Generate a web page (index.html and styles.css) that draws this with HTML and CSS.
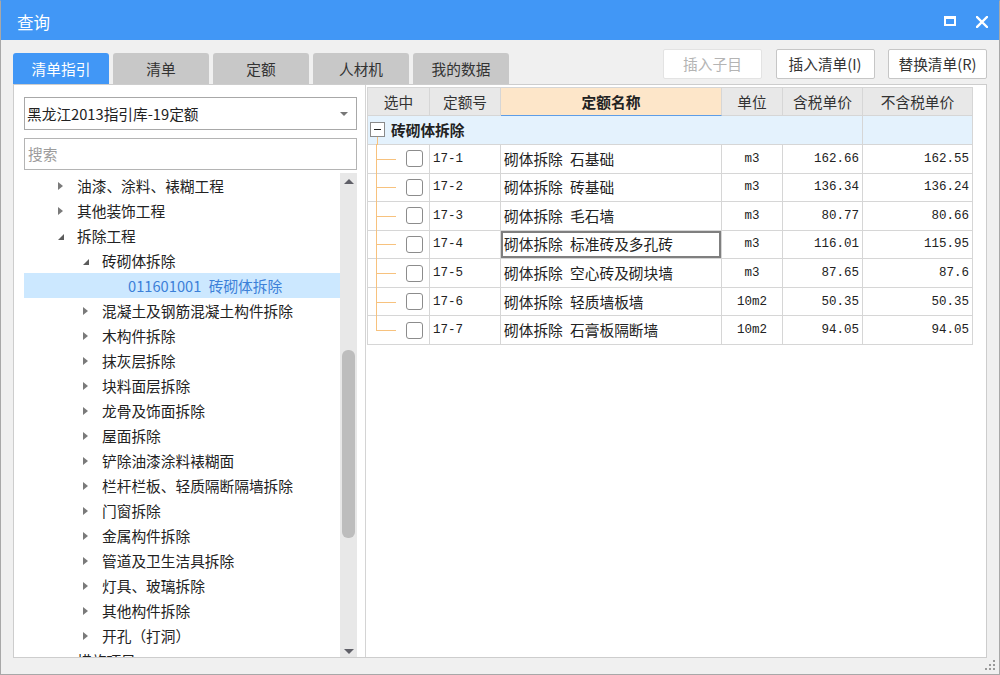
FILE: index.html
```html
<!DOCTYPE html>
<html lang="zh-CN">
<head>
<meta charset="utf-8">
<title>查询</title>
<link rel="stylesheet" href="styles.css">
</head>
<body>
<div class="window">
  <div class="titlebar">
    <span class="title">查询</span>
    <div class="win-ctrls">
      <svg class="ic-max" width="12" height="10" viewBox="0 0 12 10"><rect x="0" y="0" width="12" height="3" fill="#fff"/><rect x="1" y="1" width="10" height="8" fill="none" stroke="#fff" stroke-width="2"/></svg>
      <svg class="ic-close" width="12" height="12" viewBox="0 0 12 12"><path d="M1 1L11 11M11 1L1 11" stroke="#fff" stroke-width="2.4" stroke-linecap="square"/></svg>
    </div>
  </div>
  <div class="main">
    <div class="topbar">
      <div class="tabs">
        <div class="tab active">清单指引</div>
        <div class="tab">清单</div>
        <div class="tab">定额</div>
        <div class="tab">人材机</div>
        <div class="tab">我的数据</div>
      </div>
      <div class="actions">
        <button class="btn disabled">插入子目</button>
        <button class="btn">插入清单(I)</button>
        <button class="btn">替换清单(R)</button>
      </div>
    </div>
    <div class="content">
      <div class="left-pane">
        <div class="combo"><span class="combo-text">黑龙江2013指引库-19定额</span><span class="caret"></span></div>
        <div class="search">搜索</div>
        <div class="tree-wrap">
          <div class="tree">
            <div class="node l1"><span class="arr arr-closed"></span><span class="lbl">油漆、涂料、裱糊工程</span></div>
            <div class="node l1"><span class="arr arr-closed"></span><span class="lbl">其他装饰工程</span></div>
            <div class="node l1"><span class="arr arr-open"></span><span class="lbl">拆除工程</span></div>
            <div class="node l2"><span class="arr arr-open"></span><span class="lbl">砖砌体拆除</span></div>
            <div class="node l3 selected"><span class="lbl">011601001&ensp;砖砌体拆除</span></div>
            <div class="node l2"><span class="arr arr-closed"></span><span class="lbl">混凝土及钢筋混凝土构件拆除</span></div>
            <div class="node l2"><span class="arr arr-closed"></span><span class="lbl">木构件拆除</span></div>
            <div class="node l2"><span class="arr arr-closed"></span><span class="lbl">抹灰层拆除</span></div>
            <div class="node l2"><span class="arr arr-closed"></span><span class="lbl">块料面层拆除</span></div>
            <div class="node l2"><span class="arr arr-closed"></span><span class="lbl">龙骨及饰面拆除</span></div>
            <div class="node l2"><span class="arr arr-closed"></span><span class="lbl">屋面拆除</span></div>
            <div class="node l2"><span class="arr arr-closed"></span><span class="lbl">铲除油漆涂料裱糊面</span></div>
            <div class="node l2"><span class="arr arr-closed"></span><span class="lbl">栏杆栏板、轻质隔断隔墙拆除</span></div>
            <div class="node l2"><span class="arr arr-closed"></span><span class="lbl">门窗拆除</span></div>
            <div class="node l2"><span class="arr arr-closed"></span><span class="lbl">金属构件拆除</span></div>
            <div class="node l2"><span class="arr arr-closed"></span><span class="lbl">管道及卫生洁具拆除</span></div>
            <div class="node l2"><span class="arr arr-closed"></span><span class="lbl">灯具、玻璃拆除</span></div>
            <div class="node l2"><span class="arr arr-closed"></span><span class="lbl">其他构件拆除</span></div>
            <div class="node l2"><span class="arr arr-closed"></span><span class="lbl">开孔（打洞）</span></div>
            <div class="node l1"><span class="arr"></span><span class="lbl">措施项目</span></div>
          </div>
          <div class="vscroll">
            <div class="sb-btn sb-up"><span class="tri-up"></span></div>
            <div class="sb-thumb"></div>
            <div class="sb-fill"></div>
            <div class="sb-btn sb-down"><span class="tri-down"></span></div>
          </div>
        </div>
      </div>
      <div class="right-pane">
        <div class="grid">
          <div class="row hdr">
            <div class="cell">选中</div>
            <div class="cell">定额号</div>
            <div class="cell hl">定额名称</div>
            <div class="cell">单位</div>
            <div class="cell">含税单价</div>
            <div class="cell">不含税单价</div>
          </div>
          <div class="row grp">
            <div class="cell gname"><span class="minus"></span><span class="gtext">砖砌体拆除</span></div>
            <div class="cell"></div>
          </div>
          <div class="row data">
            <div class="cell sel"><span class="chk"></span></div>
            <div class="cell code">17-1</div>
            <div class="cell name">砌体拆除&ensp;石基础</div>
            <div class="cell unit">m3</div>
            <div class="cell num">162.66</div>
            <div class="cell num">162.55</div>
          </div>
          <div class="row data">
            <div class="cell sel"><span class="chk"></span></div>
            <div class="cell code">17-2</div>
            <div class="cell name">砌体拆除&ensp;砖基础</div>
            <div class="cell unit">m3</div>
            <div class="cell num">136.34</div>
            <div class="cell num">136.24</div>
          </div>
          <div class="row data">
            <div class="cell sel"><span class="chk"></span></div>
            <div class="cell code">17-3</div>
            <div class="cell name">砌体拆除&ensp;毛石墙</div>
            <div class="cell unit">m3</div>
            <div class="cell num">80.77</div>
            <div class="cell num">80.66</div>
          </div>
          <div class="row data">
            <div class="cell sel"><span class="chk"></span></div>
            <div class="cell code">17-4</div>
            <div class="cell name focus">砌体拆除&ensp;标准砖及多孔砖</div>
            <div class="cell unit">m3</div>
            <div class="cell num">116.01</div>
            <div class="cell num">115.95</div>
          </div>
          <div class="row data">
            <div class="cell sel"><span class="chk"></span></div>
            <div class="cell code">17-5</div>
            <div class="cell name">砌体拆除&ensp;空心砖及砌块墙</div>
            <div class="cell unit">m3</div>
            <div class="cell num">87.65</div>
            <div class="cell num">87.6</div>
          </div>
          <div class="row data">
            <div class="cell sel"><span class="chk"></span></div>
            <div class="cell code">17-6</div>
            <div class="cell name">砌体拆除&ensp;轻质墙板墙</div>
            <div class="cell unit">10m2</div>
            <div class="cell num">50.35</div>
            <div class="cell num">50.35</div>
          </div>
          <div class="row data last">
            <div class="cell sel"><span class="chk"></span></div>
            <div class="cell code">17-7</div>
            <div class="cell name">砌体拆除&ensp;石膏板隔断墙</div>
            <div class="cell unit">10m2</div>
            <div class="cell num">94.05</div>
            <div class="cell num">94.05</div>
          </div>
        </div>
      </div>
    </div>
    <div class="statusbar">
      <svg class="grip" width="12" height="12" viewBox="0 0 12 12"><g fill="#9a9a9a"><rect x="8" y="0" width="2" height="2"/><rect x="4" y="4" width="2" height="2"/><rect x="8" y="4" width="2" height="2"/><rect x="0" y="8" width="2" height="2"/><rect x="4" y="8" width="2" height="2"/><rect x="8" y="8" width="2" height="2"/></g></svg>
    </div>
  </div>
</div>
</body>
</html>
```
FILE: styles.css
```css
* { box-sizing: border-box; }
html, body { margin: 0; padding: 0; }
body {
  width: 1000px;
  height: 675px;
  overflow: hidden;
  font-family: "Noto Sans CJK SC", "Microsoft YaHei", sans-serif;
  font-size: 14.7px;
  line-height: 20px;
  color: #222;
  background: #fff;
}
.window {
  width: 1000px;
  height: 675px;
  border: 1px solid #a8a8a8;
  border-top-color: #4197f6;
  background: #f0f0f0;
  display: flex;
  flex-direction: column;
}
.titlebar {
  height: 39px;
  flex: none;
  background: #4197f6;
  display: flex;
  align-items: center;
  padding: 3px 11px 0 16px;
  color: #fff;
}
.title { flex: 1; font-size: 16.5px; line-height: 22px; }
.win-ctrls { display: flex; align-items: center; gap: 20px; }
.ic-max { margin-top: -2px; }
.main {
  flex: 1;
  display: flex;
  flex-direction: column;
  padding: 0 12px;
}
.topbar {
  height: 44px;
  flex: none;
  display: flex;
  justify-content: space-between;
  align-items: flex-end;
}
.tabs { display: flex; gap: 4px; }
.tab {
  width: 96px;
  height: 31px;
  background: #c8c8c8;
  border-radius: 3px 3px 0 0;
  color: #333;
  text-align: center;
  line-height: 31px;
}
.tab.active { background: #4197f6; color: #fff; }
.actions {
  align-self: flex-start;
  padding-top: 9px;
  display: flex;
  gap: 13.5px;
}
.btn {
  width: 99px;
  height: 30px;
  background: #fff;
  border: 1px solid #c6c6c6;
  border-radius: 2px;
  font-family: inherit;
  font-size: 14.7px;
  color: #333;
  padding: 0;
  line-height: 28px;
}
.btn.disabled { border-color: #e3e3e3; color: #b4b4b4; }
.content {
  height: 574px;
  flex: none;
  background: #fff;
  border: 1px solid #cdcdcd;
  display: flex;
}
.left-pane {
  width: 352px;
  flex: none;
  border-right: 1px solid #d4d4d4;
  padding: 12px 0 0 10px;
}
.combo {
  width: 333px;
  height: 33px;
  border: 1px solid #a8a8a8;
  display: flex;
  align-items: center;
  padding: 0 8px 0 2px;
}
.combo-text { flex: 1; }
.caret {
  width: 0; height: 0;
  border-left: 4px solid transparent;
  border-right: 4px solid transparent;
  border-top: 4px solid #777;
}
.search {
  margin-top: 8px;
  width: 333px;
  height: 32px;
  border: 1px solid #b4b4b4;
  color: #9c9c9c;
  padding-left: 3px;
  line-height: 30px;
}
.tree-wrap {
  margin-top: 3px;
  width: 333px;
  height: 484px;
  display: flex;
  overflow: hidden;
}
.tree { width: 316px; flex: none; }
.node {
  height: 25px;
  display: flex;
  align-items: center;
  line-height: 25px;
}
.lbl { white-space: nowrap; }
.node.l1 { padding-left: 34px; }
.node.l2 { padding-left: 59px; }
.node.l3 { padding-left: 104px; }
.node.selected { background: #cce8ff; color: #3c80d8; }
.arr { width: 19px; flex: none; display: flex; align-items: center; height: 25px; }
.arr-closed::before {
  content: "";
  width: 0; height: 0;
  border-top: 4px solid transparent;
  border-bottom: 4px solid transparent;
  border-left: 5px solid #7a7a7a;
}
.arr-open::before {
  content: "";
  width: 0; height: 0;
  border-left: 6px solid transparent;
  border-bottom: 6px solid #5c5c5c;
  margin-top: 2px;
}
.vscroll {
  width: 17px;
  flex: none;
  background: #e8e8e8;
  display: flex;
  flex-direction: column;
  align-items: center;
}
.sb-btn { height: 17px; width: 17px; flex: none; display: flex; justify-content: center; }
.sb-up { align-items: center; }
.sb-down { align-items: flex-end; padding-bottom: 3px; }
.tri-up {
  width: 0; height: 0;
  border-left: 5px solid transparent;
  border-right: 5px solid transparent;
  border-bottom: 5px solid #606068;
  margin-top: -1px;
}
.tri-down {
  width: 0; height: 0;
  border-left: 5px solid transparent;
  border-right: 5px solid transparent;
  border-top: 5px solid #606068;
}
.sb-thumb {
  margin-top: 160px;
  width: 13px;
  height: 188px;
  flex: none;
  background: #bdbdbd;
  border-radius: 6px;
}
.sb-fill { flex: 1; }
.right-pane {
  flex: 1;
  padding: 2px 0 0 1px;
}
.grid {
  width: 606px;
  border-left: 1px solid #d6d6d6;
  border-top: 1px solid #d6d6d6;
}
.row {
  display: grid;
  grid-template-columns: 62px 71px 221px 61px 80px 110px;
}
.cell {
  border-right: 1px solid #d6d6d6;
  border-bottom: 1px solid #d6d6d6;
  display: flex;
  align-items: center;
  white-space: nowrap;
  overflow: hidden;
}
.hdr { height: 28px; background: #e8e8e8; }
.hdr .cell { justify-content: center; color: #333; }
.hdr .cell.hl {
  background: #fde6c9;
  font-weight: 700;
  color: #222;
  border-bottom: 1px solid #5e9de6;
}
.grp {
  height: 29px;
  background: #e4f2fd;
  grid-template-columns: 495px 110px;
}
.gname { padding-left: 2px; overflow: visible; }
.minus {
  position: relative;
  width: 15px;
  height: 15px;
  flex: none;
  border: 1px solid #8a8a8a;
  background: #fff;
  margin-top: -1px;
}
.minus::before {
  content: "";
  position: absolute;
  left: 3px; top: 6px;
  width: 7px; height: 1px;
  background: #222;
}
.minus::after {
  content: "";
  position: absolute;
  left: 6px; top: 14px;
  width: 1px; height: 8px;
  background: #f7c27e;
}
.gtext { margin-left: 6px; font-weight: 700; }
.data { height: 28.57px; }
.sel { position: relative; overflow: visible; }
.sel::before {
  content: "";
  position: absolute;
  left: 8px; top: -1px; bottom: -1px;
  width: 1px;
  background: #f7c27e;
}
.last .sel::before { bottom: 50%; }
.sel::after {
  content: "";
  position: absolute;
  left: 8px; top: 50%;
  width: 20px; height: 1px;
  background: #f7c27e;
}
.chk {
  margin-left: 38px;
  width: 17px;
  height: 17px;
  border: 1px solid #8c8c8c;
  border-radius: 3px;
  background: #fff;
}
.code, .unit, .num {
  font-family: "Liberation Mono", "DejaVu Sans Mono", monospace;
  font-size: 12.5px;
}
.code { padding-left: 3px; }
.name { padding-left: 3px; }
.name.focus { box-shadow: inset 0 0 0 2px #7f7f7f; }
.unit { justify-content: center; }
.num { justify-content: flex-end; padding-right: 3px; }
.statusbar {
  flex: 1;
  display: flex;
  justify-content: flex-end;
  align-items: flex-end;
  margin-right: -10px;
  padding-bottom: 2px;
}
```
